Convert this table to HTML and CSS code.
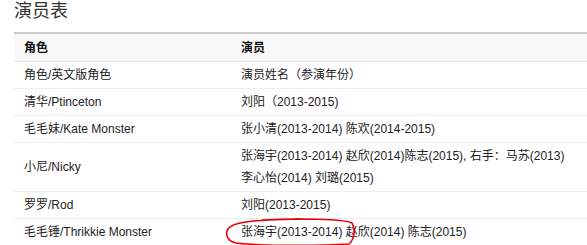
FILE: index.html
```html
<!DOCTYPE html>
<html lang="zh">
<head>
  <meta charset="UTF-8">
  <title>演员表</title>
  <link rel="stylesheet" href="styles.css">
</head>
<body>

  <h2 class="title">演员表</h2>

  <div class="cast">
    <table class="cast-table">
      <thead>
        <tr>
          <th class="col-role">角色</th>
          <th>演员</th>
        </tr>
      </thead>
      <tbody>
        <tr>
          <td>角色/英文版角色</td>
          <td>演员姓名（参演年份）</td>
        </tr>
        <tr>
          <td>清华/Ptinceton</td>
          <td>刘阳（2013-2015)</td>
        </tr>
        <tr>
          <td>毛毛妹/Kate Monster</td>
          <td>张小清(2013-2014) 陈欢(2014-2015)</td>
        </tr>
        <tr>
          <td>小尼/Nicky</td>
          <td class="nowrap">张海宇(2013-2014) 赵欣(2014)陈志(2015), 右手：马苏(2013)<br>李心怡(2014) 刘璐(2015)</td>
        </tr>
        <tr>
          <td>罗罗/Rod</td>
          <td>刘阳(2013-2015)</td>
        </tr>
        <tr>
          <td>毛毛锤/Thrikkie Monster</td>
          <td>张海宇(2013-2014) 赵欣(2014) 陈志(2015)</td>
        </tr>
      </tbody>
    </table>

    <!-- hand-drawn red circle around the first actor -->
    <svg class="mark" width="587" height="245" viewBox="0 0 587 245">
      <path d="M262 220 C300 218, 345 219, 352 223 C356 229, 354 240, 349 244 C320 246, 262 246, 236 243 C227 241, 225 234, 228 229 C232 222, 252 220, 300 219"
            fill="none" stroke="#e8000b" stroke-width="1.6" stroke-linecap="round"/>
    </svg>
  </div>

</body>
</html>
```

FILE: styles.css
```css
body {
  margin: 0;
  padding: 0 0 0 14px;
  font-family: "Liberation Sans", "Noto Sans CJK SC", sans-serif;
  font-size: 12px;
  color: #222;
  background: #fff;
  overflow: hidden;
}

.title {
  margin: 0 0 10px;
  font-size: 18px;
  line-height: 22px;
  font-weight: normal;
  color: #333;
}

.cast-table {
  width: 573px;
  table-layout: fixed;
  border-collapse: collapse;
}

.cast-table th {
  text-align: left;
  font-weight: bold;
  color: #111;
  background: #f8f8f8;
  border-top: 2px solid #ccc;
  border-bottom: 1px solid #e6e6e6;
  padding: 3px 10px 2px;
  line-height: 22px;
}

.cast-table .col-role {
  width: 197px;
}

.cast-table td {
  padding: 2px 10px;
  line-height: 22px;
  border-bottom: 1px solid #eee;
  vertical-align: middle;
}

.nowrap {
  white-space: nowrap;
}

.mark {
  position: absolute;
  left: 0;
  top: 0;
  pointer-events: none;
}
```
